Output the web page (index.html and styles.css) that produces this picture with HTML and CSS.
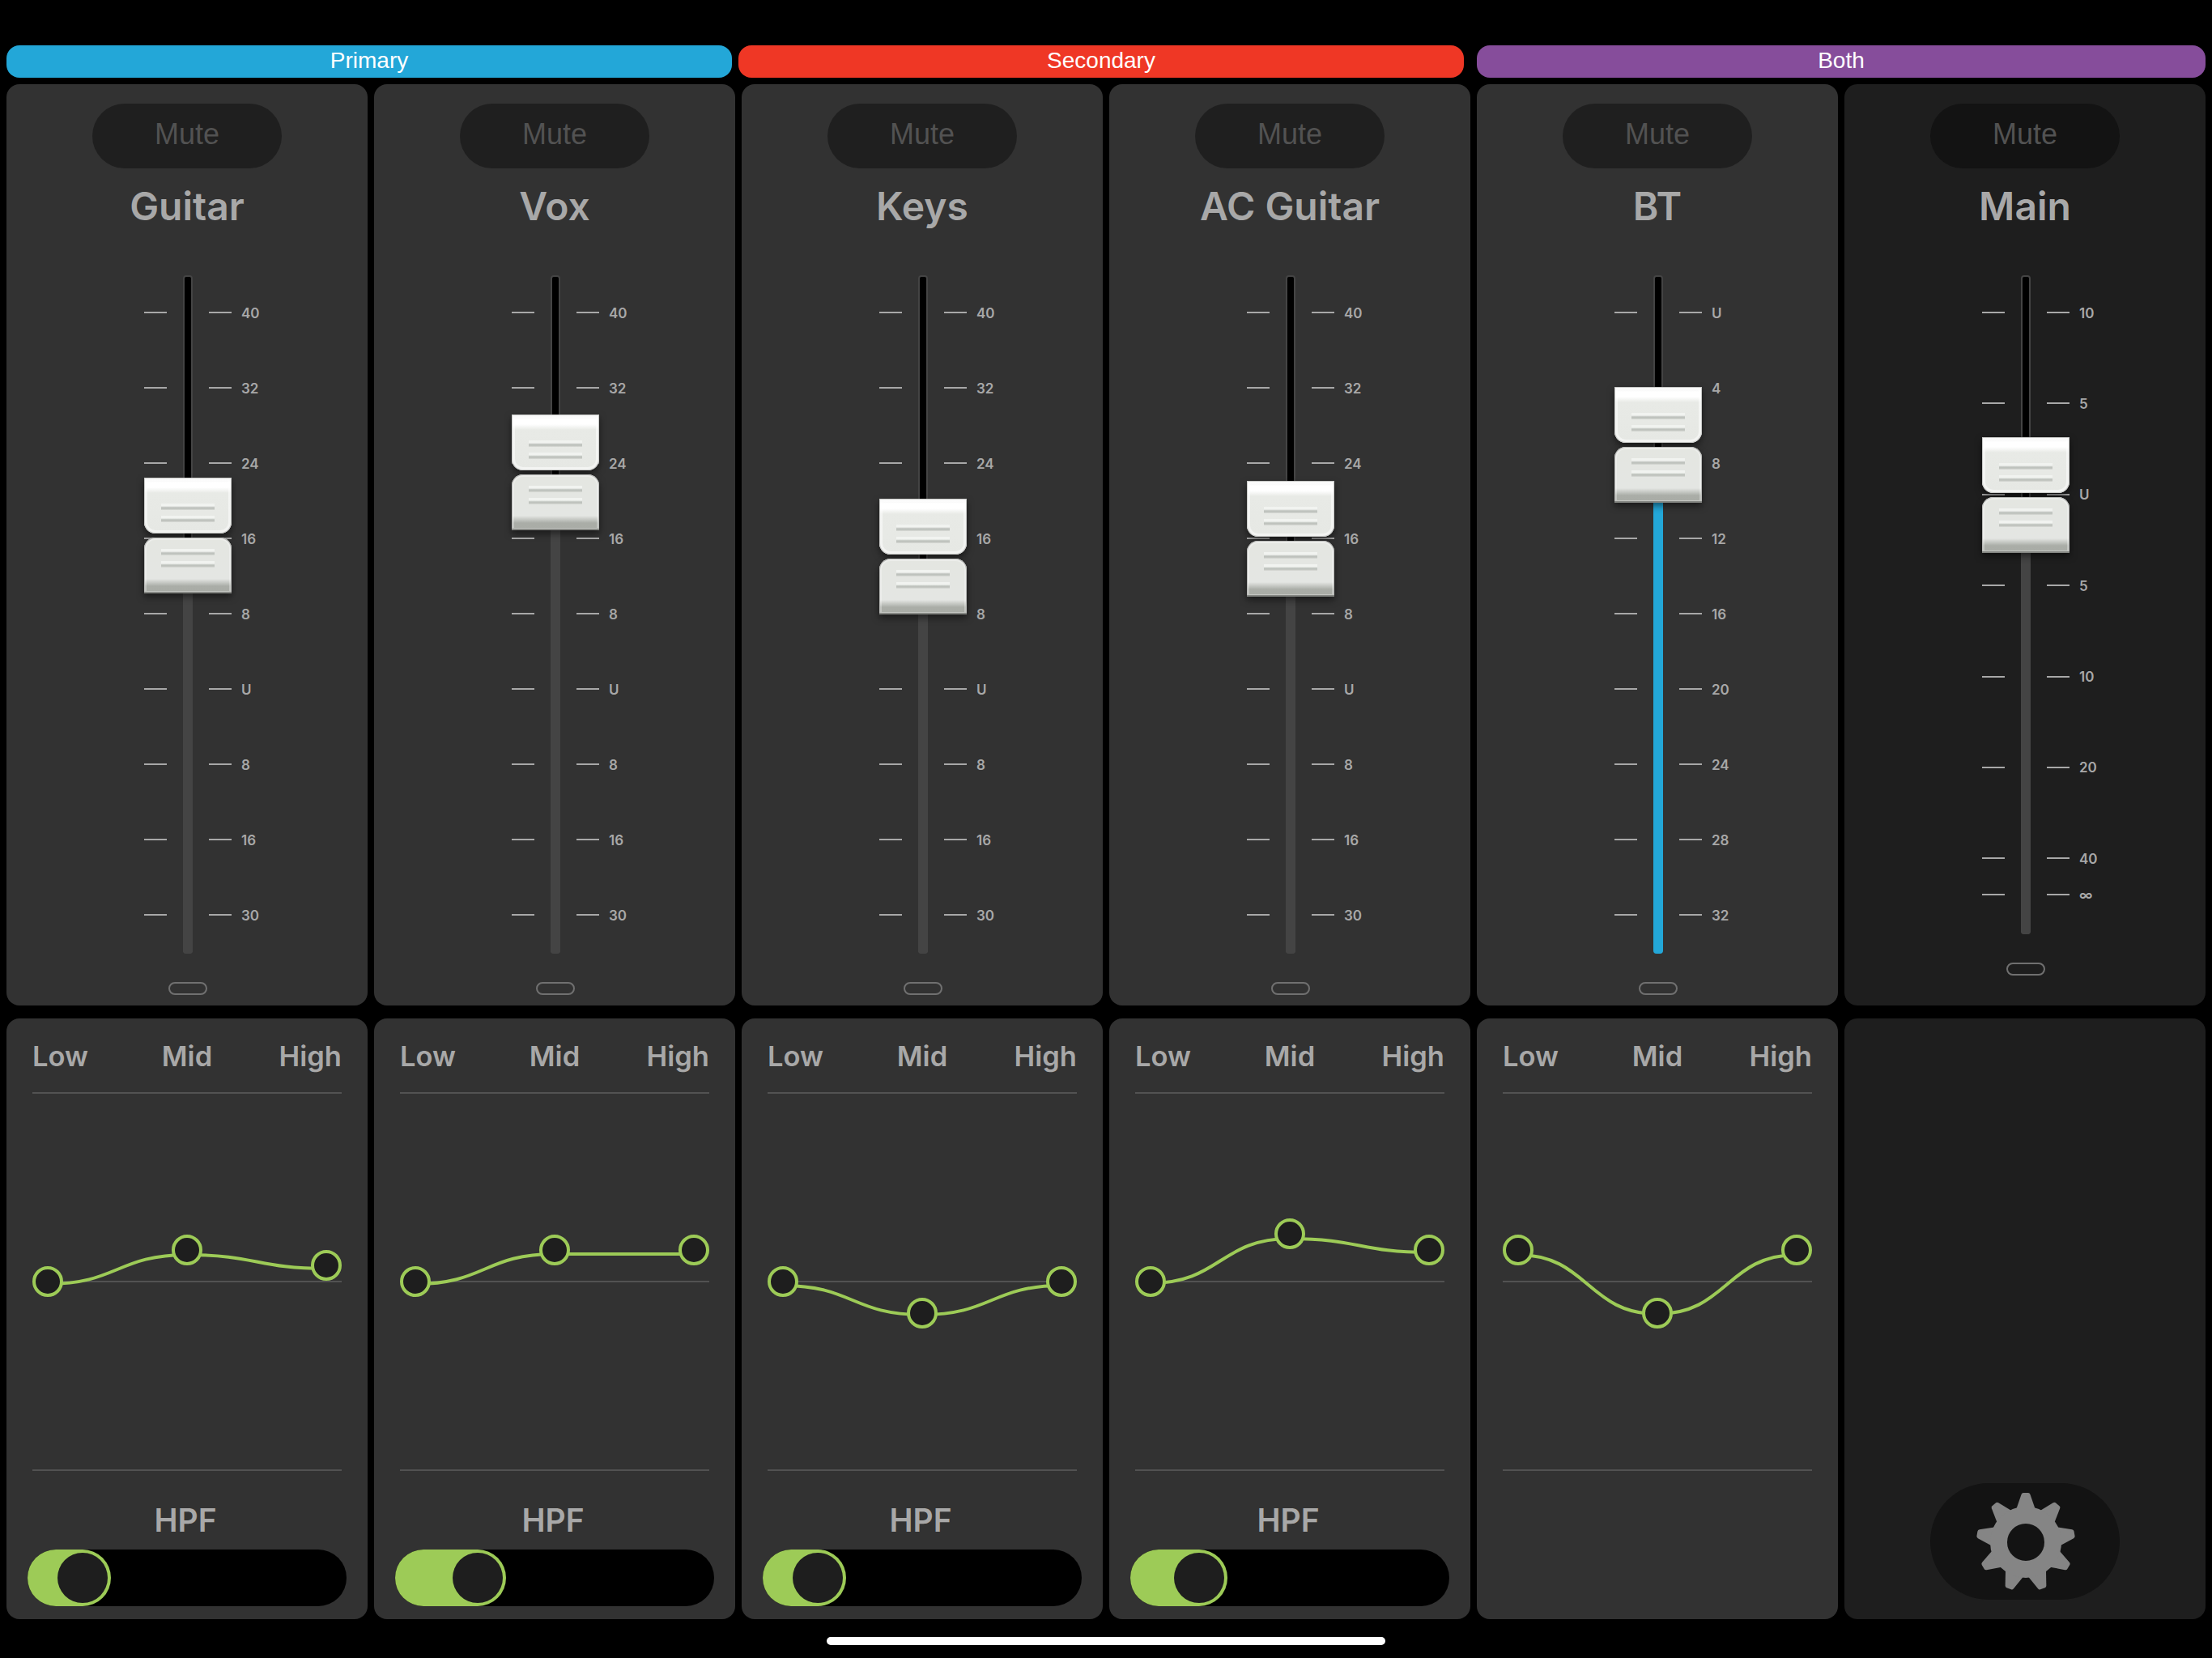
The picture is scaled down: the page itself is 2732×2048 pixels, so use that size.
FILE: index.html
```html
<!DOCTYPE html>
<html lang="en">
<head>
  <meta charset="UTF-8">
  <meta name="viewport" content="width=device-width, initial-scale=1.0">
  <title>Mixer</title>
  <link rel="stylesheet" href="styles.css">
</head>
<body>
  <div class="groups">
    <div class="group primary">Primary</div>
    <div class="group secondary">Secondary</div>
    <div class="group both">Both</div>
  </div>

  <div class="row" id="channels"></div>
  <div class="row" id="eqs"></div>

  <div class="home-bar"></div>

  <script>
    const gain = ['40', '32', '24', '16', '8', 'U', '8', '16', '30'];

    // knob: px from the top of the track, eq: handle y, curve: line y, hpf: fill width
    const channels = [
      { name: 'Guitar', scale: gain, knob: 250, eq: [234, 195, 214], curve: [237, 201, 218], hpf: 102.5 },
      { name: 'Vox', scale: gain, knob: 172, eq: [234, 195, 195], curve: [237, 200, 200], hpf: 137 },
      { name: 'Keys', scale: gain, knob: 276, eq: [234, 273, 234], curve: [239, 275, 239], hpf: 102.5 },
      { name: 'AC Guitar', scale: gain, knob: 254, eq: [234, 175, 195], curve: [236, 181, 198], hpf: 120 },
      { name: 'BT', scale: ['U', '4', '8', '12', '16', '20', '24', '28', '32'], knob: 138, fill: true, eq: [195, 273, 195], curve: [201, 274, 201] },
      { name: 'Main', scale: ['10', '5', 'U', '5', '10', '20', '40', '∞'], knob: 200, main: true }
    ];

    function strip(c) {
      const ticks = c.scale.map(n => `<li><i></i><i></i><span>${n}</span></li>`).join('');
      return `
        <section class="strip ${c.main ? 'main' : ''}">
          <button class="mute">Mute</button>
          <h2>${c.name}</h2>
          <div class="fader">
            <ul class="scale">${ticks}</ul>
            <div class="track"><div class="level ${c.fill ? 'on' : ''}" style="top: ${c.knob + 72}px"></div></div>
            <div class="knob" style="top: ${c.knob}px">
              <div class="cap upper"><b></b><b></b></div>
              <div class="cap lower"><b></b><b></b></div>
            </div>
          </div>
          <div class="led"></div>
        </section>`;
    }

    function gear() {
      let teeth = '';
      for (let i = 0; i < 9; i++) {
        teeth += `<path d="M-12 -40 L-5.5 -59 Q-4.8 -61 -3 -61 H3 Q4.8 -61 5.5 -59 L12 -40 Z" transform="rotate(${i * 40})"/>`;
      }
      return `
        <button class="settings" aria-label="Settings">
          <svg width="124" height="124" viewBox="-62 -62 124 124">
            ${teeth}<circle r="33.5"/>
          </svg>
        </button>`;
    }

    function eq(c) {
      if (c.main) return `<section class="eq main">${gear()}</section>`;
      const [a, b, d] = c.curve;
      const dots = c.eq.map((y, i) => `<circle cx="${19 + i * 172}" cy="${y}" r="17"/>`).join('');
      const hpf = c.hpf === undefined ? '' : `
        <h3>HPF</h3>
        <div class="slider"><div class="value" style="width: ${c.hpf}px"><div class="thumb"></div></div></div>`;
      return `
        <section class="eq">
          <div class="bands"><span>Low</span><span>Mid</span><span>High</span></div>
          <svg class="graph" width="382" height="468" viewBox="0 0 382 468">
            <path class="grid" d="M0 1H382M0 234H382M0 467H382"/>
            <path class="curve" d="M19 ${a}C105 ${a} 105 ${b} 191 ${b}S277 ${d} 363 ${d}"/>
            ${dots}
          </svg>
          ${hpf}
        </section>`;
    }

    document.getElementById('channels').innerHTML = channels.map(strip).join('');
    document.getElementById('eqs').innerHTML = channels.map(eq).join('');
  </script>
</body>
</html>
```
FILE: styles.css
```css
:root {
  --panel: #323232;
  --panel-dark: #1e1e1e;
  --text: #a8a8a8;
  --line: #525252;
  --blue: #23a7d8;
  --red: #ef3725;
  --purple: #864d9b;
  --green: #9dcb57;
}

* {
  margin: 0;
  padding: 0;
  box-sizing: border-box;
}

body {
  width: 2732px;
  height: 2048px;
  padding: 56px 8px 0;
  background: #000;
  color: var(--text);
  font-family: Inter, sans-serif;
  overflow: hidden;
}

button {
  border: none;
  cursor: pointer;
}

/* Group headers */
.groups {
  display: flex;
  gap: 8px;
}

.group {
  width: 896px;
  height: 40px;
  border-radius: 16px;
  color: #fff;
  font: 28px/37px "Liberation Sans", Arial, sans-serif;
  text-align: center;
}

.primary { background: var(--blue); }
.secondary { background: var(--red); }

.both {
  width: 900px;
  margin-left: 8px;
  background: var(--purple);
}

.row {
  display: grid;
  grid-template-columns: repeat(6, 446px);
  gap: 8px;
  margin-top: 8px;
}

#eqs { margin-top: 16px; }

/* Channel strips */
.strip {
  display: flex;
  flex-direction: column;
  align-items: center;
  height: 1137.5px;
  padding-top: 24px;
  border-radius: 16px;
  background: var(--panel);
}

.mute {
  width: 234px;
  height: 80px;
  padding-bottom: 4px;
  border-radius: 40px;
  background: #1f1f1f;
  color: #525252;
  font: 36px "Liberation Sans", Arial, sans-serif;
}

.strip.main,
.eq.main {
  background: var(--panel-dark);
}

.main .mute { background: #131313; }

h2 {
  margin-top: 17px;
  font-size: 48px;
  font-weight: 600;
  line-height: 60px;
}

.fader {
  position: relative;
  width: 108px;
  height: 838px;
  margin: 55px 0 35px 2px;
}

.main .fader { height: 814px; }

.scale {
  padding-top: 45px;
  list-style: none;
}

.scale li {
  display: flex;
  align-items: center;
  height: 2px;
  margin-bottom: 91px;
}

.main .scale li { margin-bottom: 110.4px; }
.main .scale li:nth-last-child(2) { margin-bottom: 43px; }

.scale i {
  flex: none;
  width: 28px;
  height: 2px;
  background: var(--text);
}

.scale i + i { margin-left: 52px; }

.scale span {
  margin-left: 12px;
  padding-top: 1px;
  font-size: 17px;
  font-weight: 600;
  line-height: 20px;
}

.track {
  position: absolute;
  top: 0;
  bottom: 0;
  left: 48px;
  width: 12px;
  border: 2px solid #444;
  border-radius: 4px;
  background: #000;
}

.level {
  position: absolute;
  left: -2px;
  right: -2px;
  bottom: -2px;
  border-radius: 0 0 4px 4px;
  background: #444;
}

.level.on { background: var(--blue); }

.knob {
  position: absolute;
  left: 0;
  display: flex;
  flex-direction: column;
  gap: 5px;
}

.cap {
  display: flex;
  flex-direction: column;
  align-items: center;
  gap: 7px;
  width: 108px;
  height: 69px;
  box-shadow: inset 0 0 0 1px #c9cac8, inset 0 0 0 4px rgba(255, 255, 255, 0.5), 0 4px 8px rgba(0, 0, 0, 0.5);
}

.upper {
  padding-top: 32px;
  border-radius: 0 0 14px 14px;
  background: linear-gradient(#ededed, #fff 6px, #fff 12px, #e8eae6 19px, #e6e8e4);
}

.lower {
  padding-top: 14px;
  border-radius: 14px 14px 0 0;
  background: linear-gradient(#e4e6e1, #e4e6e3 51px, #aaada7 60px, #a9aca6);
  box-shadow: inset 0 -2px 0 #858783, inset 0 0 0 1px #b9bab8, inset 0 0 0 3px rgba(255, 255, 255, 0.3), 0 4px 8px rgba(0, 0, 0, 0.5);
}

.cap b {
  width: 66px;
  height: 8px;
  background: linear-gradient(#f1f3f0 3px, #bcc0bb 5px, #c5c8c3 7px, #e0e2de);
}

.led {
  width: 48px;
  height: 16px;
  margin-left: 2px;
  border: 2px solid #707070;
  border-radius: 8px;
}

/* EQ panels */
.eq {
  display: flex;
  flex-direction: column;
  align-items: center;
  height: 742.5px;
  padding-top: 23.5px;
  border-radius: 16px;
  background: var(--panel);
}

.bands {
  display: grid;
  grid-template-columns: repeat(3, 1fr);
  width: 382px;
  height: 68px;
  font-size: 34.5px;
  font-weight: 600;
  line-height: 47px;
  text-align: center;
}

.bands :first-child { text-align: left; }
.bands :last-child { text-align: right; }

.graph { flex: none; }

.grid { stroke: var(--line); stroke-width: 2; }

.curve {
  fill: none;
  stroke: var(--green);
  stroke-width: 4;
}

.graph circle {
  fill: #1e1e1e;
  stroke: var(--green);
  stroke-width: 4;
}

h3 {
  margin: 36px 4px 0 0;
  font-size: 39px;
  font-weight: 600;
  line-height: 50px;
}

.slider {
  width: 394px;
  height: 70px;
  margin-top: 11px;
  border-radius: 35px;
  background: #000;
}

.value {
  display: flex;
  justify-content: flex-end;
  height: 70px;
  padding: 4px;
  border-radius: 35px;
  background: var(--green);
}

.thumb {
  width: 62px;
  height: 62px;
  border-radius: 50%;
  background: #1e1e1e;
}

.eq.main {
  justify-content: flex-end;
  padding-bottom: 24px;
}

.settings {
  display: flex;
  align-items: center;
  justify-content: center;
  width: 234px;
  height: 144px;
  padding: 2px 0 0 2px;
  border-radius: 72px;
  background: #131313;
}

.settings path { fill: #858585; }

.settings circle {
  fill: none;
  stroke: #858585;
  stroke-width: 21;
}

.home-bar {
  width: 690px;
  height: 10px;
  margin: 22px auto 0;
  border-radius: 5px;
  background: #fff;
}
```
